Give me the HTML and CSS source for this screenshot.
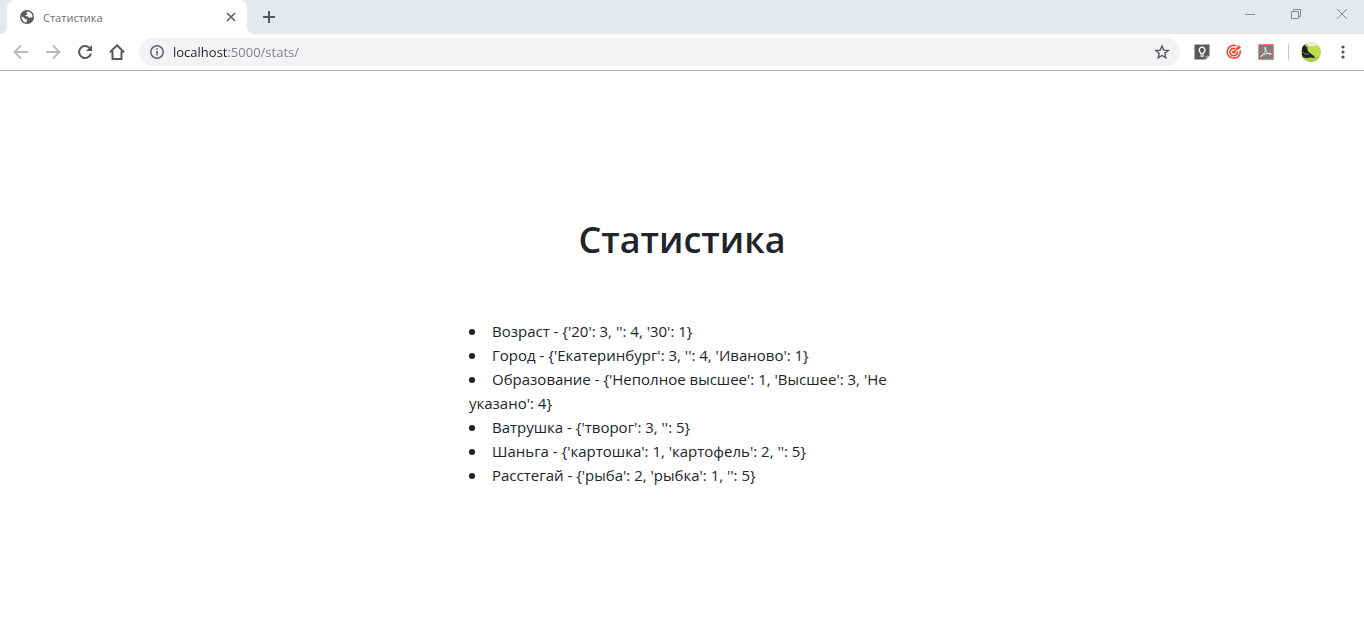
FILE: index.html
```html
<!DOCTYPE html>
<html lang="ru">
<head>
<meta charset="utf-8">
<title>Статистика</title>
<link rel="stylesheet" href="styles.css">
</head>
<body>
<header class="browser">
  <div class="tabstrip">
    <div class="tab">
      <svg class="favicon" width="14" height="14" viewBox="0 0 14 14"><circle cx="7" cy="7" r="7" fill="#55595e"/><path d="M7.6 1.4C6.3 2 6 2.900 7 3.400 8 3.900 7 5 5.700 5.100 5 5.200 5.200 6 5.800 6.200 7.500 6.200 8.600 6.500 8.700 7.800 9.400 8.300 10.300 7.400 11 7.600 11.900 7.800 12.300 7.300 12.600 6.800 12.600 3.800 10.300 1.500 7.600 1.400ZM1.500 6.200C1.200 9.500 3.300 12.200 6.300 12.600 6.800 11.700 6.500 11 7.200 10.400 7.600 9.700 6.800 9.300 5.600 9.300 4.600 9.200 4.900 7.800 4.100 7.500 3 7.300 2 7 1.500 6.200Z" fill="#fff"/></svg>
      <span class="tab-title">Статистика</span>
      <button class="icon-button tab-close" aria-label="Закрыть вкладку"><svg width="10" height="10" viewBox="0 0 10 10"><path d="M1 1l8 8M9 1L1 9" stroke="#5f6368" stroke-width="1.700"/></svg></button>
    </div>
    <button class="icon-button new-tab" aria-label="Новая вкладка"><svg width="12" height="12" viewBox="0 0 12 12"><path d="M6 0v12M0 6h12" stroke="#55595e" stroke-width="2"/></svg></button>
    <div class="window-controls">
      <button class="icon-button" aria-label="Свернуть"><svg width="12" height="12" viewBox="0 0 12 12"><path d="M1 6.500h10" stroke="#888b8d"/></svg></button>
      <button class="icon-button" aria-label="Восстановить"><svg width="12" height="12" viewBox="0 0 12 12"><path d="M1.500 3.500h7v7h-7zM3.500 3.500v-2h7v7h-2" fill="none" stroke="#888b8d"/></svg></button>
      <button class="icon-button" aria-label="Закрыть"><svg width="12" height="12" viewBox="0 0 12 12"><path d="M1 1l10 10M11 1L1 11" stroke="#888b8d"/></svg></button>
    </div>
  </div>
  <div class="toolbar">
    <nav class="nav-buttons">
      <button class="icon-button" aria-label="Назад"><svg width="16" height="16" viewBox="0 0 16 16"><path d="M15 8H2M8 1.500L1.500 8 8 14.500" fill="none" stroke="#b8babc" stroke-width="1.800"/></svg></button>
      <button class="icon-button" aria-label="Вперёд"><svg width="16" height="16" viewBox="0 0 16 16"><path d="M1 8h13M8 1.500L14.500 8 8 14.500" fill="none" stroke="#b8babc" stroke-width="1.800"/></svg></button>
      <button class="icon-button" aria-label="Обновить"><svg width="16" height="16" viewBox="0 0 16 16"><path d="M13.900 9.500A6 6 0 1 1 12.400 3.900" fill="none" stroke="#55595e" stroke-width="2"/><path d="M15 1v6H9z" fill="#55595e"/></svg></button>
      <button class="icon-button" aria-label="Домой"><svg width="16" height="16" viewBox="0 0 16 16"><path d="M1 8.300L8 1.300l7 7M3.500 7v8h9V7" fill="none" stroke="#55595e" stroke-width="2"/></svg></button>
    </nav>
    <div class="omnibox">
      <svg width="14" height="14" viewBox="0 0 14 14"><circle cx="7" cy="7" r="6.200" fill="none" stroke="#5f6368" stroke-width="1.500"/><path d="M6.200 3.200h1.600v1.600H6.200zM6.200 6h1.600v4.500H6.200z" fill="#5f6368"/></svg>
      <input class="address" type="text" aria-label="Адрес" value="localhost:5000/stats/">
      <button class="icon-button" aria-label="Добавить в закладки"><svg width="16" height="16" viewBox="0 0 16 16"><path d="M8 2l1.700 4.100 4.500.4-3.400 2.900 1 4.400L8 11.500l-3.800 2.300 1-4.400-3.400-2.900 4.500-.4z" fill="none" stroke="#55595e" stroke-width="1.400"/></svg></button>
    </div>
    <div class="extensions">
      <button class="icon-button" aria-label="Заметки"><svg width="16" height="16" viewBox="0 0 16 16"><path d="M.5.500h15v11l-4 4H.5z" fill="#55595e"/><path d="M11.500 15.500v-4h4z" fill="#95989b"/><path d="M6.700 9.800V8.600a2.900 2.900 0 1 1 2.800 0v1.200zM6.500 12h3.200" fill="none" stroke="#fff" stroke-width="1.300"/></svg></button>
      <button class="icon-button" aria-label="Цель"><svg width="16" height="16" viewBox="0 0 16 16"><path d="M10.500 1.900A6.500 6.500 0 1 0 14.100 6.500M9.300 4.800A3.700 3.700 0 1 0 11.300 7.400" fill="none" stroke="#f8432a" stroke-width="1.600"/><circle cx="7.800" cy="8.200" r="1.600" fill="#f8432a"/><path d="M7.800 8.200l4-4" stroke="#f8432a" stroke-width="1.300"/><path d="M10.600 3.500L13.200.9l.4 1.600 1.700.5-2.700 2.500-2 .1z" fill="#f8432a"/></svg></button>
      <button class="icon-button" aria-label="PDF"><svg width="16" height="16" viewBox="0 0 16 16"><path d="M.5.500h15v15H.5z" fill="#857d7d" stroke="#e48a80"/><path d="M3 12.600C5.500 11 8.300 7 7.500 3.400 7.200 2.500 6.500 3.500 7 5c.8 2.600 3 4.800 5.500 5.400 1.300.2 1-1-.5-1-3 0-6 .8-8.500 2.200-.8.500-.7 1.100-.5 1z" fill="none" stroke="#eee" stroke-width="1"/></svg></button>
      <span class="divider"></span>
      <button class="icon-button profile" aria-label="Профиль"><svg width="20" height="20" viewBox="0 0 20 20"><defs><clipPath id="avatar"><circle cx="10" cy="10" r="10"/></clipPath></defs><g clip-path="url(#avatar)"><path d="M0 0h20v20H0z" fill="#b9e04a"/><path d="M0 0h20v3L0 5z" fill="#e9efdf"/><path d="M0 14l20 1v5H0z" fill="#a5cf45"/><path d="M1 7c0-3 1-5 4-4 2 1 1 4 2 6l2 2 4 3 1 2-4-.5-5 .5c-2 0-4-1-4-3z" fill="#1d211f"/><circle cx="5.500" cy="3.500" r="1.300" fill="#d7a488"/><path d="M2 10l2 2 4 0" fill="none" stroke="#9b8072"/></g></svg></button>
      <button class="icon-button menu" aria-label="Меню"><svg width="4" height="14" viewBox="0 0 4 14"><g fill="#4d5156"><circle cx="2" cy="2" r="1.600"/><circle cx="2" cy="7" r="1.600"/><circle cx="2" cy="12" r="1.600"/></g></svg></button>
    </div>
  </div>
</header>
<main class="page">
  <h1 class="title">Статистика</h1>
  <ul class="stats">
    <li>Возраст - {'20': 3, '': 4, '30': 1}</li>
    <li>Город - {'Екатеринбург': 3, '': 4, 'Иваново': 1}</li>
    <li>Образование - {'Неполное высшее': 1, 'Высшее': 3, 'Не указано': 4}</li>
    <li>Ватрушка - {'творог': 3, '': 5}</li>
    <li>Шаньга - {'картошка': 1, 'картофель': 2, '': 5}</li>
    <li>Расстегай - {'рыба': 2, 'рыбка': 1, '': 5}</li>
  </ul>
</main>
</body>
</html>
```
FILE: styles.css
```css
* { box-sizing: border-box; }
body {
  margin: 0;
  background: #fff;
  color: #212529;
  font-family: "Open Sans", "Noto Sans", sans-serif;
}
.icon-button {
  display: flex;
  align-items: center;
  justify-content: center;
  flex: none;
  width: 16px;
  height: 16px;
  padding: 0;
  border: 0;
  background: none;
}
.icon-button svg { flex: none; }
.browser { border-bottom: 1px solid #b0b0b0; }
.tabstrip {
  display: flex;
  align-items: stretch;
  height: 34px;
  padding-left: 7px;
  background: #e5e9ec;
}
.tab {
  position: relative;
  display: flex;
  align-items: center;
  width: 240px;
  padding: 0 8px 0 13px;
  border-radius: 8px 8px 0 0;
  background: #fff;
}
.tab::before,
.tab::after {
  content: "";
  position: absolute;
  bottom: 0;
  width: 8px;
  height: 8px;
}
.tab::before {
  right: 100%;
  background: radial-gradient(circle at 0 0, transparent 8px, #fff 8px);
}
.tab::after {
  left: 100%;
  background: radial-gradient(circle at 100% 0, transparent 8px, #fff 8px);
}
.tab-title {
  flex: 1;
  margin-left: 9px;
  color: #6b6f73;
  font-size: 11px;
}
.new-tab { align-self: center; margin-left: 14px; }
.window-controls {
  display: flex;
  gap: 30px;
  margin: 6px 14px 0 auto;
}
.toolbar {
  display: flex;
  align-items: center;
  height: 36px;
  padding: 0 13px;
}
.nav-buttons { display: flex; gap: 16px; }
.omnibox {
  display: flex;
  flex: 1;
  align-items: center;
  height: 28px;
  margin: 0 14px;
  padding: 0 10px 0 11px;
  border-radius: 14px;
  background: #f1f3f4;
}
/* The host is dark, the rest of the address is grey. */
.address {
  flex: 1;
  min-width: 0;
  margin-left: 9px;
  padding: 0;
  border: 0;
  outline: 0;
  background: linear-gradient(90deg, #202124 55px, #7c8084 55px);
  -webkit-background-clip: text;
  background-clip: text;
  -webkit-text-fill-color: transparent;
  font-family: inherit;
  font-size: 13px;
}
.extensions { display: flex; align-items: center; gap: 16px; }
.profile { width: 20px; margin-right: 2px; }
.menu { width: 8px; margin-right: 4px; }
.divider {
  width: 1px;
  height: 16px;
  margin: 0 -4px 0 -2px;
  background: #c6c8ca;
}
.page {
  display: flex;
  flex-direction: column;
  align-items: center;
  padding: 145px 16px 48px;
}
.title {
  margin: 0;
  font-size: 36px;
  font-weight: 600;
  line-height: 48px;
}
.stats {
  width: 100%;
  max-width: 426px;
  margin: 55px 0 0;
  padding: 0;
  list-style: none;
  font-size: 15px;
  line-height: 24px;
}
.stats li::before {
  content: "";
  display: inline-block;
  width: 6px;
  height: 6px;
  margin-right: 17px;
  border-radius: 50%;
  background: currentColor;
  vertical-align: 2px;
}
```
